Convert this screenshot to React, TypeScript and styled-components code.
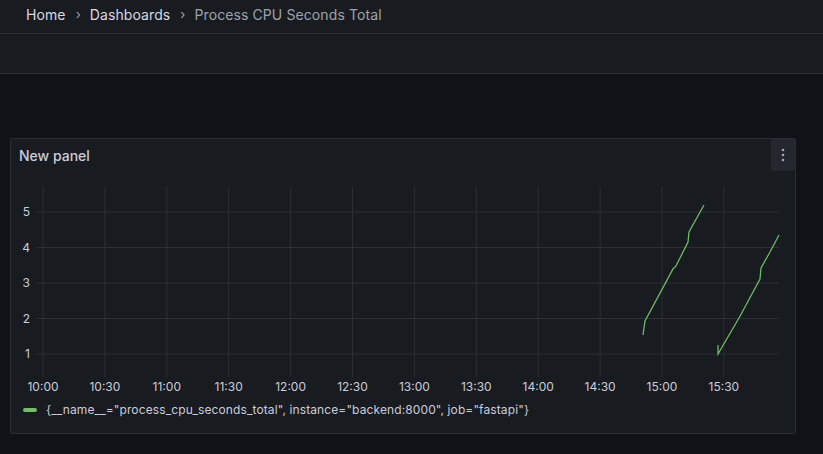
import styled, { createGlobalStyle } from 'styled-components';

const GlobalStyle = createGlobalStyle`
  body {
    margin: 0;
    background: #111217;
    font-family: Inter, "Noto Sans", sans-serif;
    color: #ccccdc;
  }
`;

const ticksX = ['10:00', '10:30', '11:00', '11:30', '12:00', '12:30', '13:00', '13:30', '14:00', '14:30', '15:00', '15:30'];
const ticksY = [5, 4, 3, 2, 1];

// chart coordinates: page x - 11, page y - 171
const seriesA = [
  [632, 164], [634, 150], [662, 98], [665, 95], [677, 71], [678, 61], [693, 34],
];
const seriesB = [
  [707, 174], [707, 183], [728, 147], [749, 108], [750, 97], [759, 81], [768, 64],
];

const toPoints = (pts: number[][]) => pts.map(p => p.join(',')).join(' ');

export default function App() {
  return (
    <>
      <GlobalStyle />
      <TopNav>
        <Crumb>Home</Crumb>
        <Sep>›</Sep>
        <Crumb>Dashboards</Crumb>
        <Sep>›</Sep>
        <Crumb $current>Process CPU Seconds Total</Crumb>
      </TopNav>
      <Toolbar />
      <Main>
        <Panel>
          <PanelHeader>
            <PanelTitle>New panel</PanelTitle>
            <MenuButton aria-label='Menu'>
              <svg width='4' height='14' viewBox='0 0 4 14'>
                <circle cx='2' cy='2' r='1.3' fill='#9fa7b3' />
                <circle cx='2' cy='7' r='1.3' fill='#9fa7b3' />
                <circle cx='2' cy='12' r='1.3' fill='#9fa7b3' />
              </svg>
            </MenuButton>
          </PanelHeader>
          <Chart width='785' height='227' viewBox='0 0 785 227'>
            {ticksX.map((t, i) => {
              const x = 32 + i * 61.9;
              return (
                <g key={t}>
                  <line x1={x} x2={x} y1={16} y2={206} stroke='#2c2f35' />
                  <text x={x} y={220} textAnchor='middle' fill='#ccccdc' fontSize='12'>
                    {t}
                  </text>
                </g>
              );
            })}
            {ticksY.map((v, i) => {
              const y = 41 + i * 35.5;
              return (
                <g key={v}>
                  <line x1={25} x2={768} y1={y} y2={y} stroke='#2c2f35' />
                  <text x={19} y={y + 4} textAnchor='end' fill='#ccccdc' fontSize='12'>
                    {v}
                  </text>
                </g>
              );
            })}
            <polyline points={toPoints(seriesA)} fill='none' stroke='#73bf69' strokeWidth='1.25' />
            <polyline points={toPoints(seriesB)} fill='none' stroke='#73bf69' strokeWidth='1.25' />
          </Chart>
          <Legend>
            <LegendSwatch />
            <LegendLabel>
              {'{__name__="process_cpu_seconds_total", instance="backend:8000", job="fastapi"}'}
            </LegendLabel>
          </Legend>
        </Panel>
      </Main>
    </>
  );
}

const TopNav = styled.header`
  display: flex;
  align-items: center;
  height: 34px;
  padding-left: 26px;
  padding-bottom: 5px;
  box-sizing: border-box;
  background: #181b1f;
  border-bottom: 1px solid #2a2d33;
  font-size: 14px;
  letter-spacing: 0.1px;
`;

const Crumb = styled.span<{ $current?: boolean }>`
  color: ${p => (p.$current ? '#9da3ae' : '#d8d9e3')};
`;

const Sep = styled.span`
  color: #9da3ae;
  margin: 0 9px 0 10px;
  font-size: 13px;
`;

const Toolbar = styled.div`
  height: 39px;
  background: #181b1f;
  border-bottom: 1px solid #2a2d33;
`;

const Main = styled.main`
  padding: 64px 27px 0 10px;
`;

const Panel = styled.section`
  height: 294px;
  background: #181b1f;
  border: 1px solid #2a2d33;
  border-radius: 2px;
  display: flex;
  flex-direction: column;
`;

const PanelHeader = styled.div`
  display: flex;
  align-items: center;
  justify-content: space-between;
  height: 32px;
  padding-left: 8px;
`;

const PanelTitle = styled.h2`
  margin: 0;
  font-size: 14px;
  font-weight: 500;
  color: #ccccdc;
`;

const MenuButton = styled.button`
  width: 24px;
  height: 32px;
  border: none;
  border-radius: 2px;
  background: #24272d;
  display: flex;
  align-items: center;
  justify-content: center;
  padding: 0;
`;

const Chart = styled.svg`
  display: block;
  font-family: Inter, "Noto Sans", sans-serif;
`;

const Legend = styled.div`
  display: flex;
  align-items: center;
  gap: 9px;
  padding-left: 12px;
  margin-top: 4px;
`;

const LegendSwatch = styled.span`
  width: 14px;
  height: 4px;
  border-radius: 2px;
  background: #73bf69;
`;

const LegendLabel = styled.span`
  font-size: 12px;
  letter-spacing: 0.11px;
  color: #ccccdc;
`;
